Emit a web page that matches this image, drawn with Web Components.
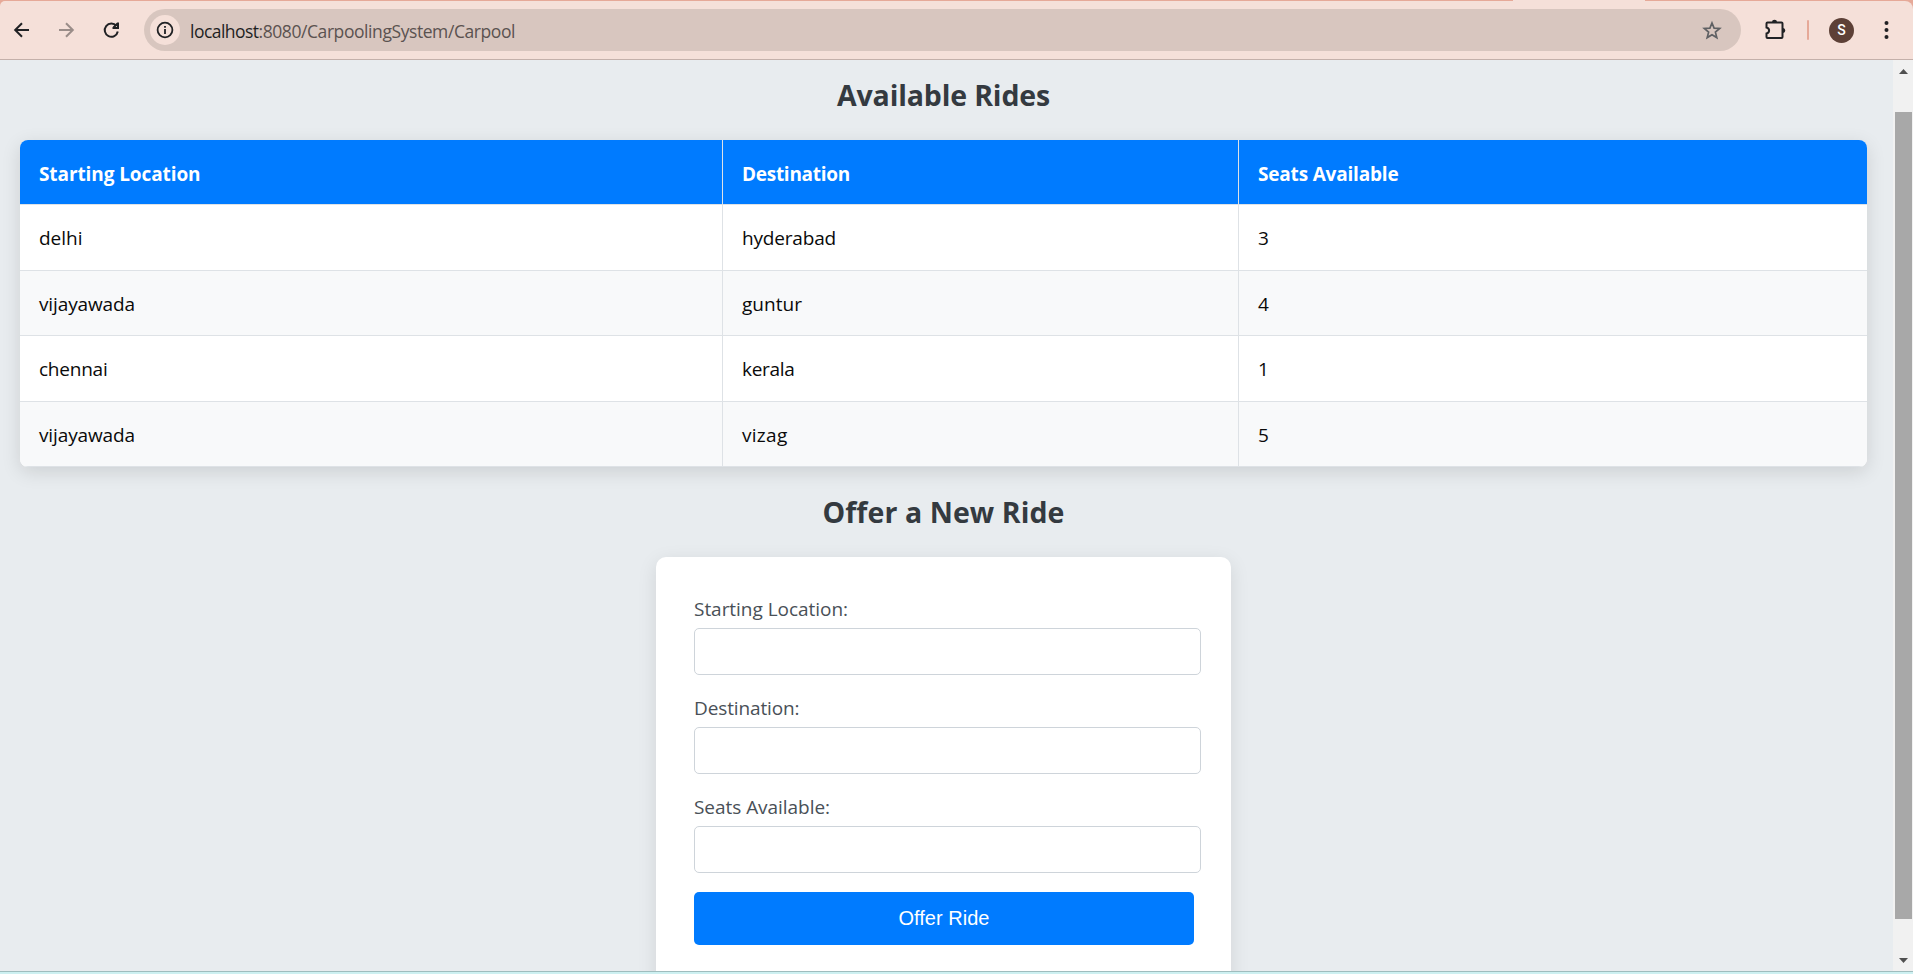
<!DOCTYPE html>
<html lang="en"><head><meta charset="utf-8"><title>Carpool</title>
<style>
html,body{margin:0;height:100%;overflow:hidden}
body{font-family:"Open Sans","Noto Sans",sans-serif;font-size:19px}
</style></head><body>
<carpool-window></carpool-window>
<script>
const define=(name,html,setup)=>customElements.define(name,class extends HTMLElement{
  connectedCallback(){
    if(this.shadowRoot)return;
    this.attachShadow({mode:'open'}).innerHTML=html;
    if(setup)setup(this,this.shadowRoot);
  }
});

// One line of text whose tracking is adjusted to the given width.
define('fit-text',`<style>:host{display:inline-block;white-space:pre}span{display:inline-block}</style><span><slot></slot></span>`,(el,root)=>{
  const span=root.querySelector('span');
  const natural=span.getBoundingClientRect().width;
  const wanted=parseFloat(el.getAttribute('width'));
  span.style.letterSpacing=((wanted-natural)/el.textContent.length)+'px';
});

define('browser-bar',`<style>
:host{display:flex;flex-direction:column;box-sizing:border-box;height:60px;background:#e6a998;border-bottom:1px solid #c4b0aa}
.strip{height:1px;flex:none;display:flex;background:#e6a998}
.strip i{margin-left:1513px;width:132px;background:#f5e0d9}
.row{flex:1;display:flex;align-items:center;height:58px;background:#f5e0d9;border-radius:5px 8px 0 0}
svg{display:block;flex:none}
.nav{display:flex;gap:21px;padding-left:10px;width:144px;box-sizing:border-box}
.addr{flex:none;width:1597px;height:42px;border-radius:21px;background:#d8c6bf;display:flex;align-items:center;box-sizing:border-box;padding-left:6px}
.info{width:30px;height:30px;border-radius:50%;background:#f5e0d9;display:flex;align-items:center;justify-content:center;margin-right:10px}
.url{flex:1;font-size:17.5px;line-height:24px;color:#5b5250;display:flex;padding-top:1px}
.host{color:#1f1f1f}
.star{margin-right:19px}
.tools{display:flex;align-items:center;flex:1}
.div{width:2px;height:20px;background:#e6a998;margin:0 20px 0 21px;border-radius:1px}
.avatar{width:25px;height:25px;border-radius:50%;background:#5d4037;color:#fff;font:500 14px Roboto,sans-serif;display:flex;align-items:center;justify-content:center;margin-right:29px}
</style>
<div class="strip"><i></i></div>
<div class="row">
<div class="nav">
<svg width="22" height="22" viewBox="0 0 22 22" fill="none" stroke="#202124" stroke-width="2"><path d="M19 11H5.500M12 4.200L5.200 11l6.800 6.800"/></svg>
<svg width="22" height="22" viewBox="0 0 22 22" fill="none" stroke="#9a8d89" stroke-width="2" style="margin-left:1px"><path d="M5 11h13.500M12 4.200L18.800 11l-6.800 6.800"/></svg>
<svg width="22" height="22" viewBox="0 0 22 22" fill="none" stroke="#202124" stroke-width="2" style="margin-left:3px"><path d="M17.800 12.500A6.600 6.600 0 1 1 16.500 7"/><path d="M18 3.500V9h-5.500M13.500 8.500L17.500 4.500"/></svg>
</div>
<div class="addr"><div class="info"><svg width="18" height="18" viewBox="0 0 18 18" fill="none" stroke="#202124" stroke-width="1.800"><circle cx="9" cy="9" r="7.400"/><path d="M9 8v5M9 5v1.800"/></svg></div>
<div class="url"><fit-text class="host" width="68.5">localhost</fit-text><fit-text width="256.5">:8080/CarpoolingSystem/Carpool</fit-text></div>
<svg class="star" width="20" height="20" viewBox="0 0 20 20" fill="none" stroke="#5f6063" stroke-width="1.700"><path d="M10 3l2.100 5.100 5.600.4-4.300 3.600 1.400 5.500L10 14.700l-4.800 2.900 1.400-5.500-4.300-3.600 5.600-.4z"/></svg></div>
<div class="tools">
<svg width="22" height="22" viewBox="0 0 22 22" style="margin-left:23px"><path d="M2.500 4.500q0-1 1-1H17.500q1 0 1 1V18q0 1-1 1H3.500q-1 0-1-1V14.500q2.600-.6 2.600-3t-2.600-3z" fill="none" stroke="#202124" stroke-width="2"/><path d="M8 3a2.500 2.300 0 0 1 5 0zM19 9a2.300 2.500 0 0 1 0 5z" fill="#202124"/></svg>
<div class="div"></div><div class="avatar">S</div>
<svg style="margin-left:1px" width="6" height="20" viewBox="0 0 6 20" fill="#202124"><circle cx="2.500" cy="3" r="2"/><circle cx="2.500" cy="10" r="2"/><circle cx="2.500" cy="17" r="2"/></svg>
</div></div>`);

define('scroll-bar',`<style>
:host{display:flex;flex-direction:column;align-items:center;width:20px;background:#f1f1f1;box-sizing:border-box;padding:9px 0 8px}
i{width:17px;height:807px;background:#a8a8a8;margin:38px 0 39px;margin-left:1px}
svg{display:block}
</style><svg width="9" height="5" fill="#505050"><path d="M0 5L4.500 0 9 5z"/></svg><i></i><svg width="9" height="5" fill="#505050"><path d="M0 0h9L4.500 5z"/></svg>`);

define('section-title',`<style>
:host{display:block;text-align:center;font-size:28.5px;line-height:40px;height:40px;font-weight:700;color:#343a40}
</style><slot></slot>`);

define('rides-table',`<style>
:host{display:block;box-sizing:border-box;width:1847px;height:327px;border-radius:8px;overflow:hidden;box-shadow:0 5px 19px rgba(0,0,0,.12);background:#fff}
.r{display:grid;grid-template-columns:702px 516px 1fr;box-sizing:border-box;border-bottom:1px solid #dee2e6;color:#0a0a0a}
.r.h{background:#007bff;color:#fff;font-weight:700}
.c{display:flex;align-items:center;padding:1px 0 0 19px}
.h .c{padding-top:3px}
.c+.c{border-left:1px solid #dee2e6}
</style>`,(el,root)=>{
  const rows=[
    [65,['Starting Location',161.5],['Destination',108],['Seats Available',140.5]],
    [66,['delhi',43.5],['hyderabad',94],['3',11]],
    [65,['vijayawada',96],['guntur',60],['4',11]],
    [66,['chennai',68.5],['kerala',52.5],['1',11]],
    [65,['vijayawada',96],['vizag',45.5],['5',11]]
  ];
  rows.forEach(([h,...cells],i)=>{
    const r=document.createElement('div');
    r.className=i?'r':'r h';
    r.style.height=h+'px';
    if(i)r.style.background=i%2?'#fff':'#f8f9fa';
    root.append(r);
    r.innerHTML=cells.map(([t,w])=>`<div class="c"><fit-text width="${w}">${t}</fit-text></div>`).join('');
  });
});

define('form-field',`<style>
:host{display:block;height:99px;color:#495057}
label{display:flex;height:32px;align-items:center;box-sizing:border-box;padding-bottom:6px}
input{display:block;box-sizing:border-box;width:507px;height:47px;border:1px solid #ced4da;border-radius:5px;background:#fff;padding:12px;font:inherit;outline:none}
</style><label><slot></slot></label><input>`);

define('ride-form',`<style>
:host{display:block;box-sizing:border-box;width:575px;height:460px;padding:39px 37px 0 38px;background:#fff;border-radius:10px;box-shadow:0 5px 19px rgba(0,0,0,.1)}
button{display:block;width:500px;height:53px;border:0;border-radius:5px;background:#007bff;color:#fff;font:20px "Liberation Sans",Arial,sans-serif;padding:0;margin-top:-1px}
</style>
<form-field><fit-text width="154">Starting Location:</fit-text></form-field>
<form-field><fit-text width="105.5">Destination:</fit-text></form-field>
<form-field><fit-text width="136">Seats Available:</fit-text></form-field>
<button type="button"><fit-text width="91">Offer Ride</fit-text></button>`);

define('carpool-window',`<style>
:host{display:flex;flex-direction:column;width:1913px;height:974px;overflow:hidden;background:#e8ecef}
.view{height:911px;display:flex;overflow:hidden}
main{flex:1;padding:15px 26px 0 20px;display:flex;flex-direction:column;align-items:center}
.foot{height:3px;box-sizing:border-box;background:#cdf0f1;border-top:1px solid #9fbdbe;flex:none}
rides-table{margin:25px 0;flex:none}
ride-form{margin-top:25px;flex:none}
</style>
<browser-bar></browser-bar>
<div class="view"><main>
<section-title><fit-text width="213">Available Rides</fit-text></section-title>
<rides-table></rides-table>
<section-title><fit-text width="242">Offer a New Ride</fit-text></section-title>
<ride-form></ride-form>
</main><scroll-bar></scroll-bar></div>
<div class="foot"></div>`);
</script></body></html>
